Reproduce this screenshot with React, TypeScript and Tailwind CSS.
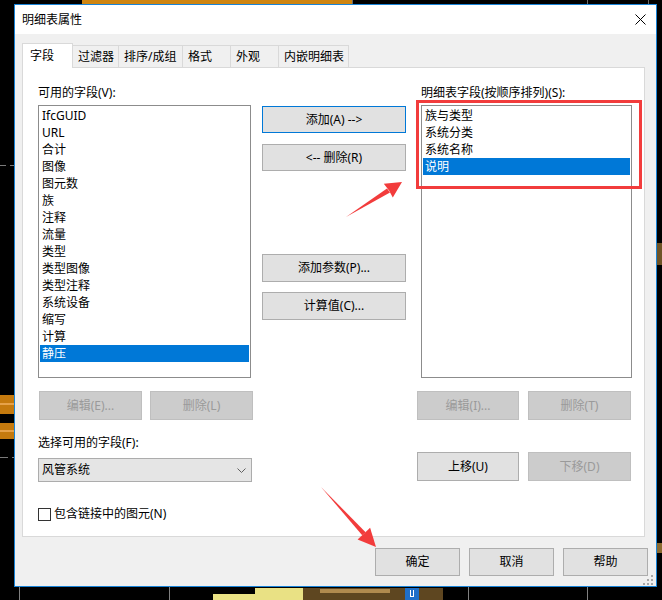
import React from 'react';

const leftItems = ['IfcGUID', 'URL', '合计', '图像', '图元数', '族', '注释', '流量', '类型', '类型图像', '类型注释', '系统设备', '缩写', '计算', '静压'];
const rightItems = ['族与类型', '系统分类', '系统名称', '说明'];

type BtnProps = { label: string; disabled?: boolean; focused?: boolean; className?: string };

function Btn({ label, disabled, focused, className = '' }: BtnProps) {
  const look = disabled
    ? 'bg-[#cccccc] border-[#bfbfbf] text-[#9a9a9a]'
    : focused
    ? 'bg-[#e1e1e1] border-[#0078d7] text-black'
    : 'bg-[#e1e1e1] border-[#adadad] text-black';
  return (
    <div className={`flex items-center justify-center border text-[12px] leading-none ${look} ${className}`}>
      {label}
    </div>
  );
}

function ListBox({ items, selected, className = '' }: { items: string[]; selected: number; className?: string }) {
  return (
    <div className={`border border-[#8c8c8c] bg-white pt-[1px] ${className}`}>
      {items.map((it, i) => (
        <div
          key={it}
          className={`mx-[1px] h-[17px] pl-[2px] leading-[17px] ${i === selected ? 'bg-[#0078d7] text-white' : 'text-black'}`}
        >
          {it}
        </div>
      ))}
    </div>
  );
}

const tabs = [
  { label: '过滤器', w: 'w-[46px]' },
  { label: '排序/成组', w: 'w-[64px]' },
  { label: '格式', w: 'w-[48px]' },
  { label: '外观', w: 'w-[48px]' },
  { label: '内嵌明细表', w: 'w-[70px]' },
];

export default function App() {
  return (
    <div className="relative w-[662px] h-[600px] overflow-hidden bg-black text-[12px] text-black font-['Noto_Sans','Noto_Sans_CJK_SC',sans-serif]">
      {/* background canvas scraps */}
      <div className="absolute left-[82px] top-0 h-[4px] w-[270px] bg-[#cf8511]" />
      <div className="absolute left-[352px] top-0 h-[4px] w-[1px] bg-[#6a6a6a]" />
      <div className="absolute left-[587px] top-0 h-[4px] w-[1px] bg-[#6a6a6a]" />
      <div className="absolute left-[648px] top-0 h-[4px] w-[1px] bg-[#6a6a6a]" />
      <div className="absolute left-0 top-[165px] h-[1px] w-[6px] bg-[#7a7a7a]" />
      <div className="absolute left-[10px] top-[165px] h-[1px] w-[4px] bg-[#7a7a7a]" />
      <div className="absolute left-0 top-[395px] h-[19px] w-[14px] bg-[#c57a0e]" />
      <div className="absolute left-0 top-[403px] h-[2px] w-[14px] bg-[#e6a24a]" />
      <div className="absolute left-0 top-[423px] h-[16px] w-[14px] bg-[#c57a0e]" />
      <div className="absolute left-0 top-[430px] h-[2px] w-[14px] bg-[#e6a24a]" />
      <div className="absolute left-0 top-[457px] h-[1px] w-[8px] bg-[#7a7a7a]" />
      <div className="absolute left-[12px] top-[457px] h-[1px] w-[2px] bg-[#7a7a7a]" />
      <div className="absolute left-[657px] top-[243px] h-[22px] w-[5px] bg-[#6e5326]" />
      <div className="absolute left-[657px] top-[543px] h-[10px] w-[5px] bg-[#8b6a30]" />
      <div className="absolute left-[19px] top-[587px] h-[13px] w-[1px] bg-[#808080]" />
      <div className="absolute left-[169px] top-[587px] h-[13px] w-[1px] bg-[#808080]" />
      <div className="absolute left-[468px] top-[587px] h-[13px] w-[1px] bg-[#808080]" />
      <div className="absolute left-[587px] top-[587px] h-[13px] w-[1px] bg-[#808080]" />
      <div className="absolute left-[213px] top-[594px] h-[6px] w-[90px] bg-[#e9e184]" />
      <div className="absolute left-[255px] top-[588px] h-[6px] w-[48px] bg-[#e9e184]" />
      <div className="absolute left-[303px] top-[588px] h-[12px] w-[102px] bg-[#5e4620]" />
      <div className="absolute left-[320px] top-[589px] h-[4px] w-[70px] bg-[#b08a4e]" />
      <div className="absolute left-[405px] top-[588px] h-[12px] w-[14px] bg-[#1f6fc8]" />
      <div className="absolute left-[410px] top-[590px] h-[7px] w-[4px] border-x border-b border-white" />
      <div className="absolute left-[419px] top-[588px] h-[12px] w-[24px] bg-[#5e4620]" />

      <div className="pt-[4px] pl-[14px]">
        <div className="flex h-[583px] w-[643px] flex-col border border-[#1883d7] bg-[#f0f0f0]">
          {/* title bar */}
          <div className="flex h-[29px] items-center justify-between bg-white pl-[7px] pr-[10px]">
            <span className="leading-none">明细表属性</span>
            <svg width="11" height="11" viewBox="0 0 11 11">
              <path d="M0.5 0.5 L10.5 10.5 M10.5 0.5 L0.5 10.5" stroke="#000" strokeWidth="1" />
            </svg>
          </div>

          {/* tabs + panel */}
          <div className="pl-[7px] pt-[9px]">
            <div className="flex h-[24px] items-end">
              <div className="relative z-10 -mb-[1px] flex h-[25px] w-[51px] items-center border-l border-r border-t border-[#d9d9d9] bg-white pl-[7px]">
                字段
              </div>
              {tabs.map((t) => (
                <div
                  key={t.label}
                  className={`flex h-[22px] items-center border-r border-t border-[#d9d9d9] bg-[#f0f0f0] pl-[5px] ${t.w}`}
                >
                  {t.label}
                </div>
              ))}
            </div>
            <div className="flex h-[470px] w-[623px] border border-[#d9d9d9] bg-white pl-[15px] pt-[17px]">
              {/* left column */}
              <div className="flex w-[215px] flex-col">
                <div className="h-[16px] leading-[16px]">可用的字段(V):</div>
                <ListBox items={leftItems} selected={14} className="mt-[4px] h-[273px] w-[213px]" />
                <div className="mt-[13px] flex h-[29px]">
                  <Btn label="编辑(E)..." disabled className="ml-[1px] w-[103px]" />
                  <Btn label="删除(L)" disabled className="ml-[8px] w-[103px]" />
                </div>
                <div className="mt-[15px] h-[16px] leading-[16px]">选择可用的字段(F):</div>
                <div className="mt-[7px] flex h-[24px] w-[214px] items-center justify-between border border-[#acacac] bg-[#e5e5e5] pl-[3px] pr-[5px]">
                  <span>风管系统</span>
                  <svg width="9" height="5" viewBox="0 0 9 5">
                    <path d="M0.5 0.5 L4.5 4.5 L8.5 0.5" stroke="#606060" fill="none" strokeWidth="1" />
                  </svg>
                </div>
                <div className="mt-[25px] flex h-[14px] items-center">
                  <div className="h-[13px] w-[13px] border border-[#333333] bg-white" />
                  <span className="ml-[3px] leading-none">包含链接中的图元(N)</span>
                </div>
              </div>

              {/* middle column */}
              <div className="ml-[9px] flex w-[144px] flex-col pt-[21px]">
                <Btn label="添加(A) -->" focused className="h-[27px]" />
                <Btn label="<-- 删除(R)" className="mt-[11px] h-[27px]" />
                <Btn label="添加参数(P)..." className="mt-[83px] h-[28px]" />
                <Btn label="计算值(C)..." className="mt-[10px] h-[28px]" />
              </div>

              {/* right column */}
              <div className="ml-[11px] flex w-[215px] flex-col">
                <div className="h-[16px] pl-[4px] leading-[16px]">明细表字段(按顺序排列)(S):</div>
                <ListBox items={rightItems} selected={3} className="ml-[4px] mt-[4px] h-[273px] w-[211px]" />
                <div className="mt-[13px] flex h-[29px]">
                  <Btn label="编辑(I)..." disabled className="w-[102px]" />
                  <Btn label="删除(T)" disabled className="ml-[9px] w-[103px]" />
                </div>
                <div className="mt-[32px] flex h-[29px]">
                  <Btn label="上移(U)" className="w-[102px]" />
                  <Btn label="下移(D)" disabled className="ml-[9px] w-[103px]" />
                </div>
              </div>
            </div>
          </div>

          {/* bottom buttons */}
          <div className="mt-[11px] flex justify-end gap-[9px] pr-[8px]">
            <Btn label="确定" className="h-[28px] w-[85px]" />
            <Btn label="取消" className="h-[28px] w-[85px]" />
            <Btn label="帮助" className="h-[28px] w-[85px]" />
          </div>
        </div>
      </div>

      {/* size grip */}
      <svg className="absolute left-[643px] top-[575px]" width="10" height="10" viewBox="0 0 10 10">
        <rect x="8" y="0" width="2" height="2" fill="#a8a8a8" />
        <rect x="4" y="4" width="2" height="2" fill="#a8a8a8" />
        <rect x="8" y="4" width="2" height="2" fill="#a8a8a8" />
        <rect x="0" y="8" width="2" height="2" fill="#a8a8a8" />
        <rect x="4" y="8" width="2" height="2" fill="#a8a8a8" />
        <rect x="8" y="8" width="2" height="2" fill="#a8a8a8" />
      </svg>

      {/* annotations */}
      <div className="pointer-events-none absolute left-[416px] top-[100px] h-[89px] w-[226px] border-[3px] border-[#f23c3c]" />
      <svg className="pointer-events-none absolute left-0 top-0" width="662" height="600" viewBox="0 0 662 600">
        <polygon points="346,217 390,192.5 387,188.5" fill="#f23c3c" />
        <polygon points="402,182 392.8,197.5 389,190.5 383.8,183.8" fill="#f23c3c" />
        <polygon points="321,487 362.2,535.3 365.6,532.2" fill="#f23c3c" />
        <polygon points="376,547 357.6,539.6 363.8,533.7 370.1,527.8" fill="#f23c3c" />
      </svg>
    </div>
  );
}
